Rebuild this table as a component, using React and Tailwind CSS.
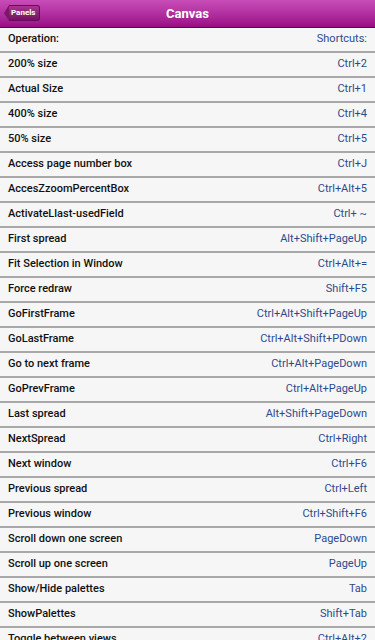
const rows = [
  ['200% size', 'Ctrl+2'],
  ['Actual Size', 'Ctrl+1'],
  ['400% size', 'Ctrl+4'],
  ['50% size', 'Ctrl+5'],
  ['Access page number box', 'Ctrl+J'],
  ['AccesZzoomPercentBox', 'Ctrl+Alt+5'],
  ['ActivateLlast-usedField', 'Ctrl+ ~'],
  ['First spread', 'Alt+Shift+PageUp'],
  ['Fit Selection in Window', 'Ctrl+Alt+='],
  ['Force redraw', 'Shift+F5'],
  ['GoFirstFrame', 'Ctrl+Alt+Shift+PageUp'],
  ['GoLastFrame', 'Ctrl+Alt+Shift+PDown'],
  ['Go to next frame', 'Ctrl+Alt+PageDown'],
  ['GoPrevFrame', 'Ctrl+Alt+PageUp'],
  ['Last spread', 'Alt+Shift+PageDown'],
  ['NextSpread', 'Ctrl+Right'],
  ['Next window', 'Ctrl+F6'],
  ['Previous spread', 'Ctrl+Left'],
  ['Previous window', 'Ctrl+Shift+F6'],
  ['Scroll down one screen', 'PageDown'],
  ['Scroll up one screen', 'PageUp'],
  ['Show/Hide palettes', 'Tab'],
  ['ShowPalettes', 'Shift+Tab'],
  ['Toggle between views', 'Ctrl+Alt+2'],
]

function Row({ left, right }) {
  return (
    <div className="flex items-center justify-between h-[25px] px-2 border-b-2 border-[#a8a8a8] bg-[#f6f6f6]">
      <span className="text-[11px] font-medium text-[#111]">{left}</span>
      <span className="text-[11px] text-[#2f4a8c]">{right}</span>
    </div>
  )
}

export default function App() {
  return (
    <div className="w-[375px] h-[640px] overflow-hidden bg-[#f6f6f6] font-['Roboto',sans-serif]">
      <div className="relative flex items-center justify-center h-[28px] bg-gradient-to-b from-[#c84cb9] to-[#9a0886] border-b border-[#5a0050]">
        <div className="absolute left-[4px] top-[5px] flex items-center">
          <div className="w-0 h-0 border-y-[8px] border-y-transparent border-r-[5px] border-r-[#7e1670]" />
          <div className="h-[16px] pl-[2px] pr-[4px] flex items-center rounded-r-[3px] bg-gradient-to-b from-[#a8368f] to-[#74105f] border border-l-0 border-[#6a0a58] text-[8px] font-bold text-white">
            Panels
          </div>
        </div>
        <span className="text-[13px] font-bold text-white">Canvas</span>
      </div>
      <Row left="Operation:" right="Shortcuts:" />
      {rows.map(([l, r]) => (
        <Row key={l} left={l} right={r} />
      ))}
    </div>
  )
}
